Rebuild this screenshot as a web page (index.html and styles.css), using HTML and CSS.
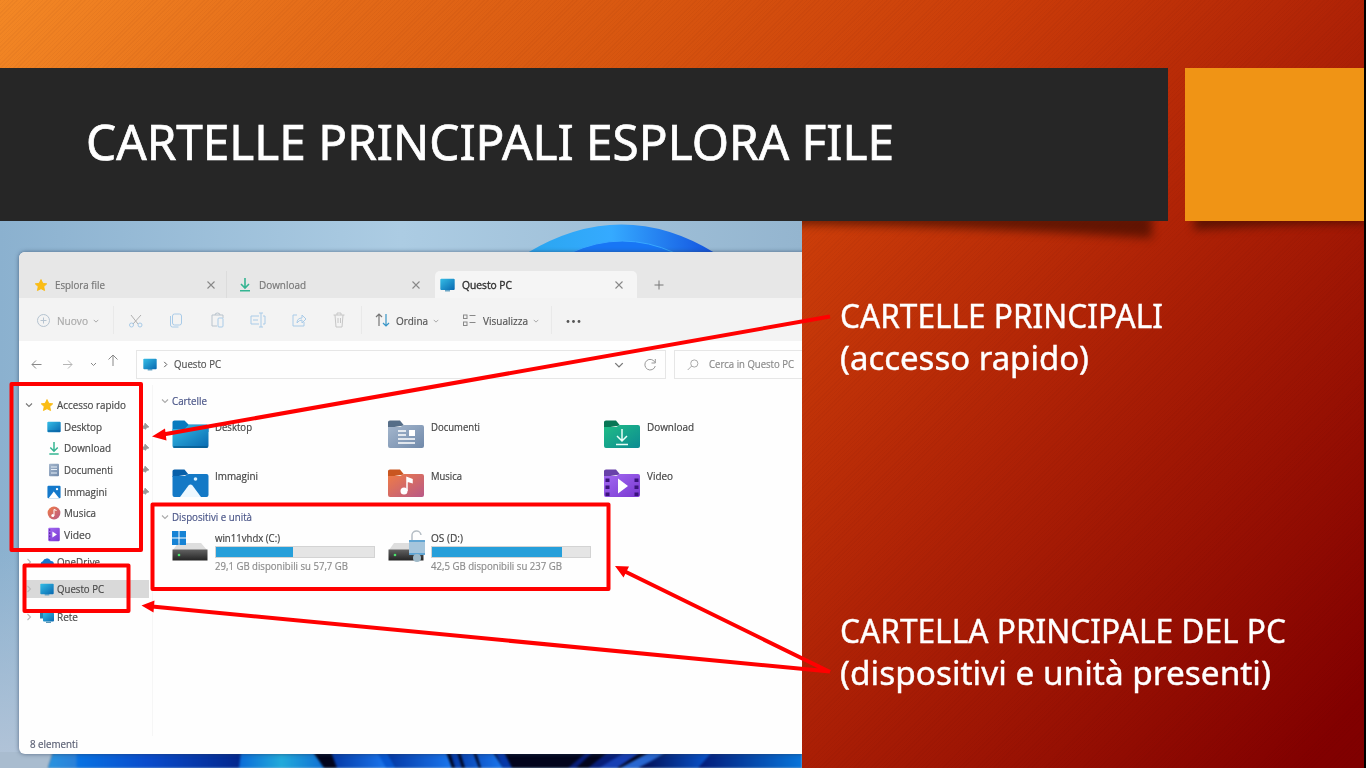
FILE: index.html
```html
<!DOCTYPE html>
<html lang="it">
<head>
<meta charset="utf-8">
<title>Cartelle principali Esplora file</title>
<link rel="stylesheet" href="styles.css">
</head>
<body>
<svg class="defs" width="0" height="0">
  <defs>
    <linearGradient id="gBlue" x2="1" y2="1"><stop stop-color="#35bde6"/><stop offset="1" stop-color="#0868b0"/></linearGradient>
    <linearGradient id="gGrey" x2="1" y2="1"><stop stop-color="#a5b7cd"/><stop offset="1" stop-color="#7089aa"/></linearGradient>
    <linearGradient id="gGreen" x2="1" y2="1"><stop stop-color="#20bd86"/><stop offset="1" stop-color="#0c8b92"/></linearGradient>
    <linearGradient id="gPink" x2="1" y2="1"><stop stop-color="#f07c45"/><stop offset="1" stop-color="#b85988"/></linearGradient>
    <linearGradient id="gViolet" x2="1" y2="1"><stop stop-color="#a36af2"/><stop offset="1" stop-color="#7938d0"/></linearGradient>
    <linearGradient id="gDrive" x2="0" y2="1"><stop stop-color="#626262"/><stop offset="1" stop-color="#242424"/></linearGradient>
  </defs>
  <symbol id="star" viewBox="0 0 14 14"><path d="M7 1.500 8.800 5.300l4 .5-3 2.800.8 4L7 10.700l-3.600 1.900.8-4-3-2.800 4-.5z" fill="#fbbd14" stroke="#f9b90f" stroke-width=".8" stroke-linejoin="round"/></symbol>
  <symbol id="down" viewBox="0 0 12 15"><path d="M6 1v9.500M2 7l4 4 4-4M1 13.800h10" fill="none" stroke="#35b592" stroke-width="1.600"/></symbol>
  <symbol id="pc" viewBox="0 0 15 14"><path d="M5 11h5v2.500H5z" fill="#6ba6c6"/><rect x=".3" y=".7" width="14.400" height="11.300" rx="1" fill="url(#gBlue)"/></symbol>
  <symbol id="desk" viewBox="0 0 14 12"><rect x=".3" y=".7" width="13.400" height="10.600" rx="1" fill="url(#gBlue)"/><path d="M1 10h12" stroke="#075f9d"/></symbol>
  <symbol id="doc" viewBox="0 0 12 14"><rect x="1" y=".7" width="10" height="12.600" rx="1" fill="url(#gGrey)"/><path d="M3 4h6M3 6.500h6M3 10h6" stroke="#e5eef7"/></symbol>
  <symbol id="pic" viewBox="0 0 13 13"><rect x=".4" y=".8" width="12.200" height="11.600" rx="1" fill="#1479cb"/><path d="M1.500 12.400 6.300 6l5 6.400z" fill="#fff"/><circle cx="9.300" cy="3.800" r="1.100" fill="#fff"/></symbol>
  <symbol id="mus" viewBox="0 0 14 14"><circle cx="7" cy="7" r="6.400" fill="url(#gPink)"/><path d="M7 9.500V3.500l2.500 1" fill="none" stroke="#fff"/><circle cx="5.800" cy="9.500" r="1.500" fill="#fff"/></symbol>
  <symbol id="vid" viewBox="0 0 12 14"><rect x=".6" y=".8" width="10.800" height="12.400" rx="1" fill="url(#gViolet)"/><path d="m4.500 4.300 4.200 2.700-4.200 2.700z" fill="#fff"/><path d="M2 2v10" stroke="#532095" stroke-dasharray="1.500 1.500"/></symbol>
  <symbol id="cloud" viewBox="0 0 14 10"><path d="M3 10a3 3 0 0 1-.2-5.800A4.300 4.300 0 0 1 10.800 4 3 3 0 0 1 11 10z" fill="#1478d0"/></symbol>
  <symbol id="net" viewBox="0 0 14 13"><rect x="0" y=".5" width="10" height="8" fill="#2a83b0"/><rect x="3" y="2.500" width="11" height="9" rx="1" fill="url(#gBlue)"/><path d="M6 12.300h5" stroke="#327fa5"/></symbol>
  <symbol id="x" viewBox="0 0 10 10"><path d="m1.500 1.500 7 7m0-7-7 7" fill="none" stroke="#888" stroke-width="1.100"/></symbol>
  <symbol id="chev" viewBox="0 0 8 8"><path d="m1 2.500 3 3 3-3" fill="none" stroke="currentColor" stroke-width="1.100"/></symbol>
  <symbol id="right" viewBox="0 0 8 8"><path d="m2.500 1 3 3-3 3" fill="none" stroke="currentColor" stroke-width="1.100"/></symbol>
  <symbol id="pin" viewBox="0 0 8 8"><path d="m4 0 4 4-2 .4-1.700 2L1.600 3.700 3.600 2zM3 5 .5 7.500" fill="#999" stroke="#999" stroke-width=".7"/></symbol>
  <symbol id="drive" viewBox="0 0 36 20"><path d="M6 1h23l6 7H1z" fill="#dedede"/><path d="M.5 7.500h35v11H.5z" fill="url(#gDrive)"/><circle cx="7" cy="13" r="1.300" fill="#4be36b"/></symbol>
</svg>

<main class="slide">
  <header class="head">
    <div class="title-bar"><h1 class="fit" data-w="808">CARTELLE PRINCIPALI ESPLORA FILE</h1></div>
    <div class="accent"></div>
    <svg class="shadows" width="1366" height="36" viewBox="0 0 1366 36"><path class="sh" d="M700-8H1152V17Q930 2 700 3z"/><path class="sh" d="M1194-8H1366V2Q1275 3 1194 9z"/></svg>
  </header>
  <div class="body">
    <section class="shot">
      <svg class="wall" width="802" height="547" viewBox="0 0 802 547">
        <defs>
          <linearGradient id="sky"><stop stop-color="#8bb1cf"/><stop offset=".5" stop-color="#accce3"/><stop offset="1" stop-color="#94b5cf"/></linearGradient>
          <linearGradient id="fog" x2="0" y2="1"><stop offset=".6" stop-color="#b3c4d8" stop-opacity="0"/><stop offset="1" stop-color="#b3c4d8"/></linearGradient>
          <linearGradient id="arc"><stop stop-color="#2aa6ef"/><stop offset=".45" stop-color="#35aaff"/><stop offset="1" stop-color="#1251df"/></linearGradient>
          <linearGradient id="p1"><stop stop-color="#2a94e0"/><stop offset=".14" stop-color="#2a80d8"/><stop offset=".15" stop-color="#0872e2"/><stop offset=".5" stop-color="#0a4ccc"/><stop offset="1" stop-color="#03258a"/></linearGradient>
          <linearGradient id="p2"><stop stop-color="#0a6bd8"/><stop offset=".5" stop-color="#22aadb"/><stop offset="1" stop-color="#0f70d4"/></linearGradient>
          <linearGradient id="p3"><stop stop-color="#0438a4"/><stop offset="1" stop-color="#1a76ee"/></linearGradient>
          <linearGradient id="p4"><stop stop-color="#020c50"/><stop offset="1" stop-color="#0a5bd8"/></linearGradient>
          <linearGradient id="p5"><stop stop-color="#041a78"/><stop offset="1" stop-color="#0874da"/></linearGradient>
        </defs>
        <rect width="802" height="547" fill="url(#sky)"/><rect width="40" height="547" fill="url(#fog)"/><rect y="531" width="60" height="16" fill="#a9bccf"/>
        <path d="M527 32Q622-25 715 32z" fill="url(#arc)"/><path d="M570 32Q622 8 675 32z" fill="#1876f5" stroke="#38a8ff"/>
        <g class="petals">
          <path d="M53 531H802V547H48z" fill="#02041c"/>
          <path d="M53 531H245V547H48z" fill="url(#p1)"/>
          <path d="M241 531H313L324 547H239z" fill="url(#p2)"/>
          <path d="M331 531H378L387 547H337z" fill="url(#p3)"/>
          <path d="M377 531h10l9 16h-10z" fill="#0756d0"/>
          <path d="M387 531h59l6 16h-56z" fill="url(#p3)"/>
          <path d="M450 531h7l5 16h-7zM460 531h13l6 16h-14zM476 531h17l10 16h-22z" fill="url(#p3)"/>
          <path d="M495 531h9l8 16h-9z" fill="#0638a8"/>
          <path d="M587 531h6l-17 16h-8zM608 531h17l-25 16h-12z" fill="#071d78"/>
          <path d="M625 531h16l-24 16h-18z" fill="#173fb4"/>
          <path d="M650 531h17l-27 16h-20z" fill="#2866d0"/>
          <path d="M669 531h47l-14 16h-64z" fill="url(#p4)"/>
          <path d="M712 531h90v16H698z" fill="url(#p5)"/>
        </g>
      </svg>
      <div class="window">
        <div class="tabs">
          <div class="tab t1"><svg width="14" height="14"><use href="#star"/></svg><span class="fit" data-w="50">Esplora file</span><svg class="end" width="10" height="10"><use href="#x"/></svg></div>
          <div class="tab t2"><svg width="12" height="15"><use href="#down"/></svg><span class="fit" data-w="47">Download</span><svg class="end" width="10" height="10"><use href="#x"/></svg></div>
          <div class="tab t3"><svg width="15" height="14"><use href="#pc"/></svg><span class="fit" data-w="50">Questo PC</span><svg class="end" width="10" height="10"><use href="#x"/></svg></div>
          <svg class="plus" width="10" height="10" viewBox="0 0 10 10"><path d="M5 .5v9M.5 5h9" stroke="#777"/></svg>
        </div>
        <div class="tools">
          <svg width="620" height="43" viewBox="0 0 620 43" fill="none" stroke="#a9cbe8">
            <g stroke="#b5c3d0"><circle cx="24.500" cy="22.500" r="6"/><path d="M24.500 19.500v6M21.500 22.500h6"/></g>
            <path d="m112 17 7 9m3-9-8 9" stroke="#b0b0b0"/><circle cx="112.500" cy="27" r="2"/><circle cx="121" cy="27" r="2"/>
            <rect x="153.500" y="16" width="9" height="11" rx="2"/><path d="M151.500 18v9q0 2 2 2h6"/>
            <path d="M198 28h-5V17h11v3M196 17q0-2 2.500-2t2.500 2" stroke="#b9c3cc"/><rect x="199" y="20" width="5" height="9" rx="1"/>
            <path d="M240 18h-8v8h8M244 18h2v8h-2M242 15v14M240 15h4M240 29h4M234 22h5"/>
            <path d="M278 17h-4v11h11v-4M278 25q0-5 5-5v-3l4 4-4 4v-3q-3 0-5 3"/>
            <g stroke="#c6c6c6"><path d="M314.500 17h11M318 17v-2h4v2M316 17l1 12h6l1-12M319 20v5M321.500 20v5"/></g>
            <g stroke="#e9e9e9"><path d="M94.500 8v28M342.500 8v28M532.500 8v28"/></g>
            <path d="m357 19 3-3 3 3M360 16v12" stroke="#777" stroke-width="1.200"/><path d="M367 16v12m-3-3 3 3 3-3" stroke="#3895c7" stroke-width="1.200"/>
            <g stroke="#888"><rect x="444.500" y="17" width="3.500" height="3.500"/><rect x="444.500" y="24" width="3.500" height="3.500"/><path d="M450.500 17.500h6M450.500 24.500h6"/></g>
            <g fill="#555" stroke="none"><circle cx="549" cy="23.500" r="1.400"/><circle cx="554.500" cy="23.500" r="1.400"/><circle cx="560" cy="23.500" r="1.400"/></g>
          </svg>
          <div class="tool-labels">
            <span class="fit faint" data-w="31">Nuovo</span><svg width="6" height="6"><use href="#chev"/></svg>
            <span class="fit l2" data-w="32">Ordina</span><svg width="6" height="6"><use href="#chev"/></svg>
            <span class="fit l3" data-w="45">Visualizza</span><svg width="6" height="6"><use href="#chev"/></svg>
          </div>
        </div>
        <div class="address">
          <svg class="nav" width="117" height="44" viewBox="0 0 117 44" fill="none" stroke="#888"><path d="M22.500 23.500H13m4-4-4 4 4 4"/><path d="M44 23.500h9m-4-4 4 4-4 4" stroke="#b5b5b5"/><path d="m72 22 2.500 2.500L77 22M94 25V14m-4.500 4.500L94 14l4.500 4.500"/></svg>
          <div class="path"><svg width="14" height="13"><use href="#pc"/></svg><svg class="sep" width="7" height="7"><use href="#right"/></svg><span class="fit" data-w="47">Questo PC</span>
            <svg class="end" width="10" height="10"><use href="#chev"/></svg><svg width="14" height="14" viewBox="0 0 14 14"><path d="M12 4.500A5.300 5.300 0 1 0 12.300 8M12.300 1v4H8.500" fill="none" stroke="#999"/></svg></div>
          <div class="search"><svg width="12" height="12" viewBox="0 0 12 12"><circle cx="7.300" cy="4.500" r="3.600" fill="none" stroke="#aaa"/><path d="m4.700 7-4 4" stroke="#aaa"/></svg><span class="fit" data-w="85">Cerca in Questo PC</span></div>
        </div>
        <div class="content">
          <nav class="side">
            <div class="row top"><svg class="ch" width="8" height="8"><use href="#chev"/></svg><svg width="14" height="14"><use href="#star"/></svg><span class="fit" data-w="69">Accesso rapido</span></div>
            <div class="row"><svg width="14" height="12"><use href="#desk"/></svg><span class="fit" data-w="38">Desktop</span><svg class="pin" width="8" height="8"><use href="#pin"/></svg></div>
            <div class="row"><svg width="14" height="14"><use href="#down"/></svg><span class="fit" data-w="47">Download</span><svg class="pin" width="8" height="8"><use href="#pin"/></svg></div>
            <div class="row"><svg width="14" height="14"><use href="#doc"/></svg><span class="fit" data-w="49">Documenti</span><svg class="pin" width="8" height="8"><use href="#pin"/></svg></div>
            <div class="row"><svg width="14" height="14"><use href="#pic"/></svg><span class="fit" data-w="43">Immagini</span><svg class="pin" width="8" height="8"><use href="#pin"/></svg></div>
            <div class="row"><svg width="14" height="14"><use href="#mus"/></svg><span class="fit" data-w="32">Musica</span></div>
            <div class="row"><svg width="14" height="15"><use href="#vid"/></svg><span class="fit" data-w="27">Video</span></div>
            <div class="row top far"><svg class="ch" width="8" height="8"><use href="#right"/></svg><svg width="14" height="10"><use href="#cloud"/></svg><span class="fit" data-w="43">OneDrive</span></div>
            <div class="row top sel"><svg class="ch" width="8" height="8"><use href="#right"/></svg><svg width="14" height="13"><use href="#pc"/></svg><span class="fit" data-w="47">Questo PC</span></div>
            <div class="row top"><svg class="ch" width="8" height="8"><use href="#right"/></svg><svg width="14" height="13"><use href="#net"/></svg><span class="fit" data-w="21">Rete</span></div>
          </nav>
          <div class="files">
            <div class="group"><svg width="8" height="8"><use href="#chev"/></svg><span class="fit" data-w="35">Cartelle</span></div>
            <div class="folders">
              <div class="item"><svg width="37" height="29" viewBox="0 0 36 29"><path d="M0 11V2Q0 .5 2 .5h10l4 4h18q2 0 2 2V12z" fill="#087abf"/><path d="M0 9h12l4-4h18q2 0 2 2v19q0 2-2 2H2q-2 0-2-2z" fill="url(#gBlue)"/><path d="M1 27h34" stroke="#075c91" stroke-width="1.500"/></svg><span class="fit" data-w="37">Desktop</span></div>
              <div class="item"><svg width="36" height="29" viewBox="0 0 36 29"><path d="M0 8V2Q0 .5 2 .5h10l4 5z" fill="#566e88"/><path d="M0 7h12l4-2h18q2 0 2 2v19q0 2-2 2H2q-2 0-2-2z" fill="url(#gGrey)"/><path d="M10 11h8M10 15h8M10 19h17M10 23h17" stroke="#fff" stroke-width="1.300"/><rect x="21" y="10" width="6" height="6" fill="#fff"/></svg><span class="fit" data-w="49">Documenti</span></div>
              <div class="item"><svg width="36" height="29" viewBox="0 0 36 29"><path d="M0 8V2Q0 .5 2 .5h10l4 5z" fill="#087655"/><path d="M0 7h12l4-2h18q2 0 2 2v19q0 2-2 2H2q-2 0-2-2z" fill="url(#gGreen)"/><path d="M18 9v12m-5-5 5 5 5-5M12 24.500h12" fill="none" stroke="#e9fff8" stroke-width="1.500"/></svg><span class="fit" data-w="47">Download</span></div>
              <div class="item"><svg width="37" height="29" viewBox="0 0 36 29"><path d="M0 8V2Q0 .5 2 .5h10l4 5z" fill="#075fa9"/><path d="M0 7h12l4-2h18q2 0 2 2v19q0 2-2 2H2q-2 0-2-2z" fill="#1479c6"/><path d="M7.500 28 16 16.500q2-2 4 0L28.500 28z" fill="#edf8ff"/><circle cx="23" cy="10" r="1.800" fill="#d9f1ff"/></svg><span class="fit" data-w="43">Immagini</span></div>
              <div class="item"><svg width="36" height="29" viewBox="0 0 36 29"><path d="M0 8V2Q0 .5 2 .5h10l4 5z" fill="#c95620"/><path d="M0 7h12l4-2h18q2 0 2 2v19q0 2-2 2H2q-2 0-2-2z" fill="url(#gPink)"/><path d="M19 22V8.500l5 2v3l-5-1.500" fill="#fff" stroke="#fff" stroke-width="1.500"/><circle cx="16" cy="22" r="3.500" fill="#fff"/></svg><span class="fit" data-w="31">Musica</span></div>
              <div class="item"><svg width="36" height="29" viewBox="0 0 36 29"><path d="M0 8V2Q0 .5 2 .5h10l4 5z" fill="#6841a9"/><path d="M0 7h12l4-2h18q2 0 2 2v19q0 2-2 2H2q-2 0-2-2z" fill="url(#gViolet)"/><path d="M14 9.500 24 17l-10 7.500z" fill="#fff"/><path d="M3.500 9.500v18M32.500 9.500v18" stroke="#3b137d" stroke-width="4" stroke-dasharray="3.500 3.500"/></svg><span class="fit" data-w="26">Video</span></div>
            </div>
            <div class="group g2"><svg width="8" height="8"><use href="#chev"/></svg><span class="fit" data-w="80">Dispositivi e unità</span></div>
            <div class="drives">
              <div class="drive"><svg width="37" height="34" viewBox="0 0 37 34"><use href="#drive" x="0" y="12" width="36" height="20"/><path d="M0 1h6.500v6.500H0zM7.500 1H14v6.500H7.500zM0 8.500h6.500V15H0zM7.500 8.500H14V15H7.500z" fill="#1683d5"/></svg><div class="info"><span class="fit" data-w="65">win11vhdx (C:)</span><div class="meter"><i class="c"></i></div><span class="fit free" data-w="133">29,1 GB disponibili su 57,7 GB</span></div></div>
              <div class="drive"><svg width="37" height="34" viewBox="0 0 37 34"><use href="#drive" x="0" y="12" width="36" height="20"/><path d="M24 10V6a4.500 4.500 0 0 1 9-1" fill="none" stroke="#b5bdc4" stroke-width="1.500"/><rect x="21" y="10" width="16" height="15" rx="1" fill="#a5c5dc"/><path d="M21 11h16M21 24h16" stroke="#4a9bd0" stroke-width="1.500"/><circle cx="29" cy="28" r="4" fill="#9fb9c8"/></svg><div class="info"><span class="fit" data-w="32">OS (D:)</span><div class="meter"><i class="d"></i></div><span class="fit free" data-w="131">42,5 GB disponibili su 237 GB</span></div></div>
            </div>
          </div>
        </div>
        <footer class="status"><span class="fit" data-w="48">8 elementi</span></footer>
      </div>
    </section>
    <aside class="notes">
      <p><span class="fit" data-w="323">CARTELLE PRINCIPALI</span><span class="fit" data-w="249">(accesso rapido)</span></p>
      <p><span class="fit" data-w="446">CARTELLA PRINCIPALE DEL PC</span><span class="fit" data-w="431">(dispositivi e unità presenti)</span></p>
    </aside>
  </div>
  <svg class="marks" width="1366" height="768" viewBox="0 0 1366 768" fill="none" stroke="#f00" stroke-width="4">
    <g stroke-linejoin="round"><rect x="11.500" y="384" width="129.500" height="166"/><rect x="24.500" y="565.500" width="104" height="45.500"/><rect x="152.500" y="504.500" width="456" height="84.500"/></g>
    <path d="M830 316.500 163 434.500M830 672 625 571.500M830 671.500 152 606.500"/>
    <g fill="#f00" stroke="none"><path d="m152 436.500 13-8 1.500 12zM615 566l14 .5-5.500 11zM141.500 605.500l13-5-1 12z"/></g>
  </svg>
</main>
<script src="fit.js"></script>
</body>
</html>
```
FILE: styles.css
```css
* { box-sizing: border-box; }
body { margin: 0; font-family: "Open Sans", "Noto Sans", sans-serif; }
.defs { position: absolute; }
svg { flex: none; display: block; }
.fit { display: block; white-space: nowrap; transform-origin: 0 50%; flex: none; }

.slide { position: relative; width: 1366px; height: 768px; overflow: hidden; padding-top: 68px; border-right: 2px solid #000;
  background: repeating-linear-gradient(135deg, rgba(70,0,0,.04) 0 1px, transparent 1px 3px), linear-gradient(129deg, #f38825 0%, #e46b18 17%, #d7550f 34%, #ca3c09 51%, #b02306 68%, #820000 97%, #800000 100%); }
.head { position: relative; z-index: 1; display: flex; gap: 17px; height: 153px; }
.title-bar { width: 1168px; flex: none; background: #262626; padding: 37px 0 0 86px; }
.title-bar h1 { margin: 0; color: #fff; font: 400 50px/73px "Noto Sans", sans-serif; -webkit-text-stroke: .7px #fff; }
.accent { flex: 1; background: #f09415; }
.shadows { position: absolute; left: 0; top: 153px; z-index: -1; }
.sh { fill: #380b00; opacity: .66; filter: blur(5px); }

.body { display: flex; height: 547px; }
.shot { position: relative; z-index: 2; width: 802px; height: 547px; overflow: hidden; padding: 31px 0 0 19px; flex: none; }
.wall { position: absolute; left: 0; top: 0; }
.petals { filter: blur(1px); }
.window { position: relative; width: 810px; height: 502px; border-radius: 6px; overflow: hidden; background: #fefefe; box-shadow: 0 0 4px rgba(40,60,90,.65); color: #555; font-size: 11px; line-height: 16px; filter: blur(.5px); }
.window .fit { -webkit-text-stroke: .2px currentColor; }

.tabs { height: 46px; background: #e7e7e7; display: flex; align-items: flex-end; }
.tab { height: 27px; display: flex; align-items: center; gap: 7px; color: #777; }
.tab .end { margin-left: auto; }
.t1 { width: 208px; padding: 0 10px 0 15px; border-right: 1px solid #dcdcdc; }
.t2 { width: 208px; padding: 0 14px 0 12px; gap: 8px; }
.t3 { width: 202px; padding: 0 13px 0 5px; background: #f5f5f5; border-radius: 5px 5px 0 0; color: #333; }
.t3 .fit { -webkit-text-stroke-width: .4px; }
.plus { margin: 0 0 8px 17px; }

.tools { height: 43px; background: #f3f3f3; display: grid; }
.tools > * { grid-area: 1 / 1; }
.tool-labels { display: flex; align-items: center; gap: 5px; padding: 3px 0 0 38px; height: 43px; }
.tool-labels svg { color: #999; }
.faint { color: #aaa; }
.l2 { margin-left: 292px; }
.l3 { margin-left: 39px; }

.address { height: 44px; display: flex; }
.path { width: 530px; height: 29px; margin-top: 9px; border: 1px solid #e6e6e6; display: flex; align-items: center; padding: 0 8px 0 6px; }
.path .sep { margin: 0 5px 0 5px; }
.path .end { margin: 0 19px 0 auto; color: #777; }
.search { width: 150px; height: 29px; margin: 9px 0 0 8px; border: 1px solid #e6e6e6; display: flex; align-items: center; gap: 10px; padding-left: 12px; color: #8a8a8a; }
.path .fit, .search .fit { margin-top: -1px; }

.content { height: 351px; display: flex; }
.side { width: 134px; padding-top: 9px; border-right: 1px solid #f6f6f6; color: #4a4a4a; }
.row { height: 21.7px; display: flex; align-items: center; gap: 3px; padding-left: 28px; padding-right: 3px; }
.row.top { padding-left: 6px; }
.row .ch { margin-right: 4px; color: #777; }
.row .pin { margin-left: auto; }
.side .top ~ .top { height: 18px; margin: 0 3px 9.500px 4px; padding-left: 2px; }
.side .top ~ .top .ch { color: #bbb; }
.side .top.far { margin-top: 7px; }
.row.sel { background: #d9d9d9; }
.files { width: 650px; padding: 8px 0 0 8px; color: #444; }
.group { display: flex; align-items: center; gap: 3px; height: 16px; color: #4b5688; }
.group svg { color: #aaa; }
.folders { display: grid; grid-template-columns: repeat(3, 216px); row-gap: 20px; padding: 11px 0 0 11px; }
.item { display: grid; grid-template-columns: 36px auto; column-gap: 7px; justify-content: start; height: 29px; }
.item .fit { margin-top: -1px; }
.g2 { margin-top: 11px; }
.drives { display: flex; padding: 5px 0 0 11px; }
.drive { width: 216px; display: flex; gap: 6px; }
.info { width: 160px; }
.meter { height: 12px; background: #e5e5e5; border: 1px solid #d3d3d3; }
.meter i { display: block; height: 10px; background: #269fda; }
.meter .c { width: 49%; }
.meter .d { width: 82%; }
.free { color: #8c8c8c; }
.status { padding: 0 11px; color: #5b6074; }

.notes { flex: 1; padding: 74px 0 0 38px; }
.notes p { margin: 0 0 231px; color: #fff; font: 400 33px/42px "Noto Sans", sans-serif; -webkit-text-stroke: .4px #fff; }
.marks { position: absolute; left: 0; top: 0; z-index: 3; }
```
FILE: fit.js
```js
// Condenses each label horizontally to its declared width.
document.querySelectorAll('.fit').forEach(function (el) {
  var want = parseFloat(el.dataset.w);
  var range = document.createRange();
  range.selectNodeContents(el);
  var natural = range.getBoundingClientRect().width;
  el.style.transform = 'scaleX(' + want / natural + ')';
  el.style.width = natural + 'px';
  el.style.marginRight = (want - natural) + 'px';
});
```
